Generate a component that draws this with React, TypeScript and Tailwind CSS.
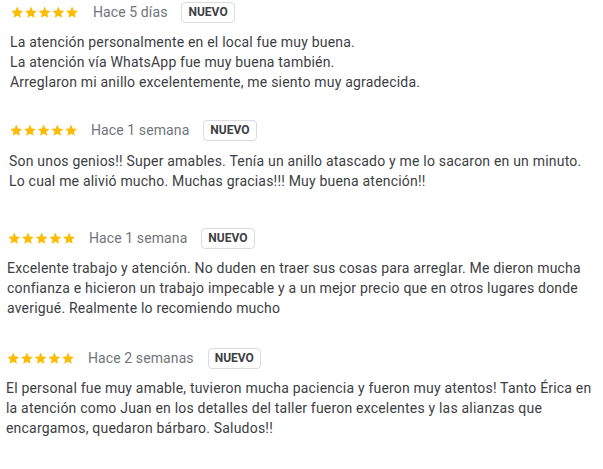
import React from "react";

const STAR = "M6.25 0.6l1.72 3.9 4.23.38-3.2 2.8.95 4.15-3.7-2.2-3.7 2.2.95-4.15-3.2-2.8 4.23-.38z";

function Stars() {
  return (
    <svg width="69" height="13" viewBox="0 0 69 13" className="shrink-0">
      {[0, 1, 2, 3, 4].map((i) => (
        <path key={i} d={STAR} transform={`translate(${i * 13.7} 0)`} fill="#fbbc04" />
      ))}
    </svg>
  );
}

type Review = { date: string; lines: string[]; cls: string; dateCls: string };

const reviews: Review[] = [
  {
    date: "Hace 5 días",
    lines: [
      "La atención personalmente en el local fue muy buena.",
      "La atención vía WhatsApp fue muy buena también.",
      "Arreglaron mi anillo excelentemente, me siento muy agradecida.",
    ],
    cls: "pl-[10px] pt-0",
    dateCls: "ml-[13px]",
  },
  {
    date: "Hace 1 semana",
    lines: [
      "Son unos genios!! Super amables. Tenía un anillo atascado y me lo sacaron en un minuto.",
      "Lo cual me alivió mucho. Muchas gracias!!! Muy buena atención!!",
    ],
    cls: "pl-[9px] pt-[26px]",
    dateCls: "ml-[12px]",
  },
  {
    date: "Hace 1 semana",
    lines: [
      "Excelente trabajo y atención. No duden en traer sus cosas para arreglar. Me dieron mucha",
      "confianza e hicieron un trabajo impecable y a un mejor precio que en otros lugares donde",
      "averigué. Realmente lo recomiendo mucho",
    ],
    cls: "pl-[7px] pt-[35px]",
    dateCls: "ml-[12px]",
  },
  {
    date: "Hace 2 semanas",
    lines: [
      "El personal fue muy amable, tuvieron mucha paciencia y fueron muy atentos! Tanto Érica en",
      "la atención como Juan en los detalles del taller fueron excelentes y las alianzas que",
      "encargamos, quedaron bárbaro. Saludos!!",
    ],
    cls: "pl-[6px] pt-[28px]",
    dateCls: "ml-[12px]",
  },
];

export default function App() {
  return (
    <div
      className="w-[603px] h-[469px] bg-white overflow-hidden"
      style={{ fontFamily: "Roboto, 'Noto Sans', Arial, sans-serif" }}
    >
      {reviews.map((r, idx) => (
        <div key={idx} className={r.cls}>
          <div className="flex items-center h-[24px]">
            <div className="pl-px">
              <Stars />
            </div>
            <span className={`${r.dateCls} text-[14px] leading-[20px] text-[#70757a] whitespace-nowrap tracking-[0.1px]`}>
              {r.date}
            </span>
            <span className="ml-[14px] h-[21px] px-[6px] flex items-center border border-[#dadce0] rounded-[4px] text-[12px] font-bold text-[#3c4043] leading-none">
              NUEVO
            </span>
          </div>
          <div className={`${idx === 1 ? "mt-[9px]" : "mt-[8px]"} text-[14px] leading-[20px] text-[#3c4043] tracking-[0.2px]`}>
            {r.lines.map((l, i) => (
              <div key={i} className="whitespace-nowrap">
                {l}
              </div>
            ))}
          </div>
        </div>
      ))}
    </div>
  );
}
